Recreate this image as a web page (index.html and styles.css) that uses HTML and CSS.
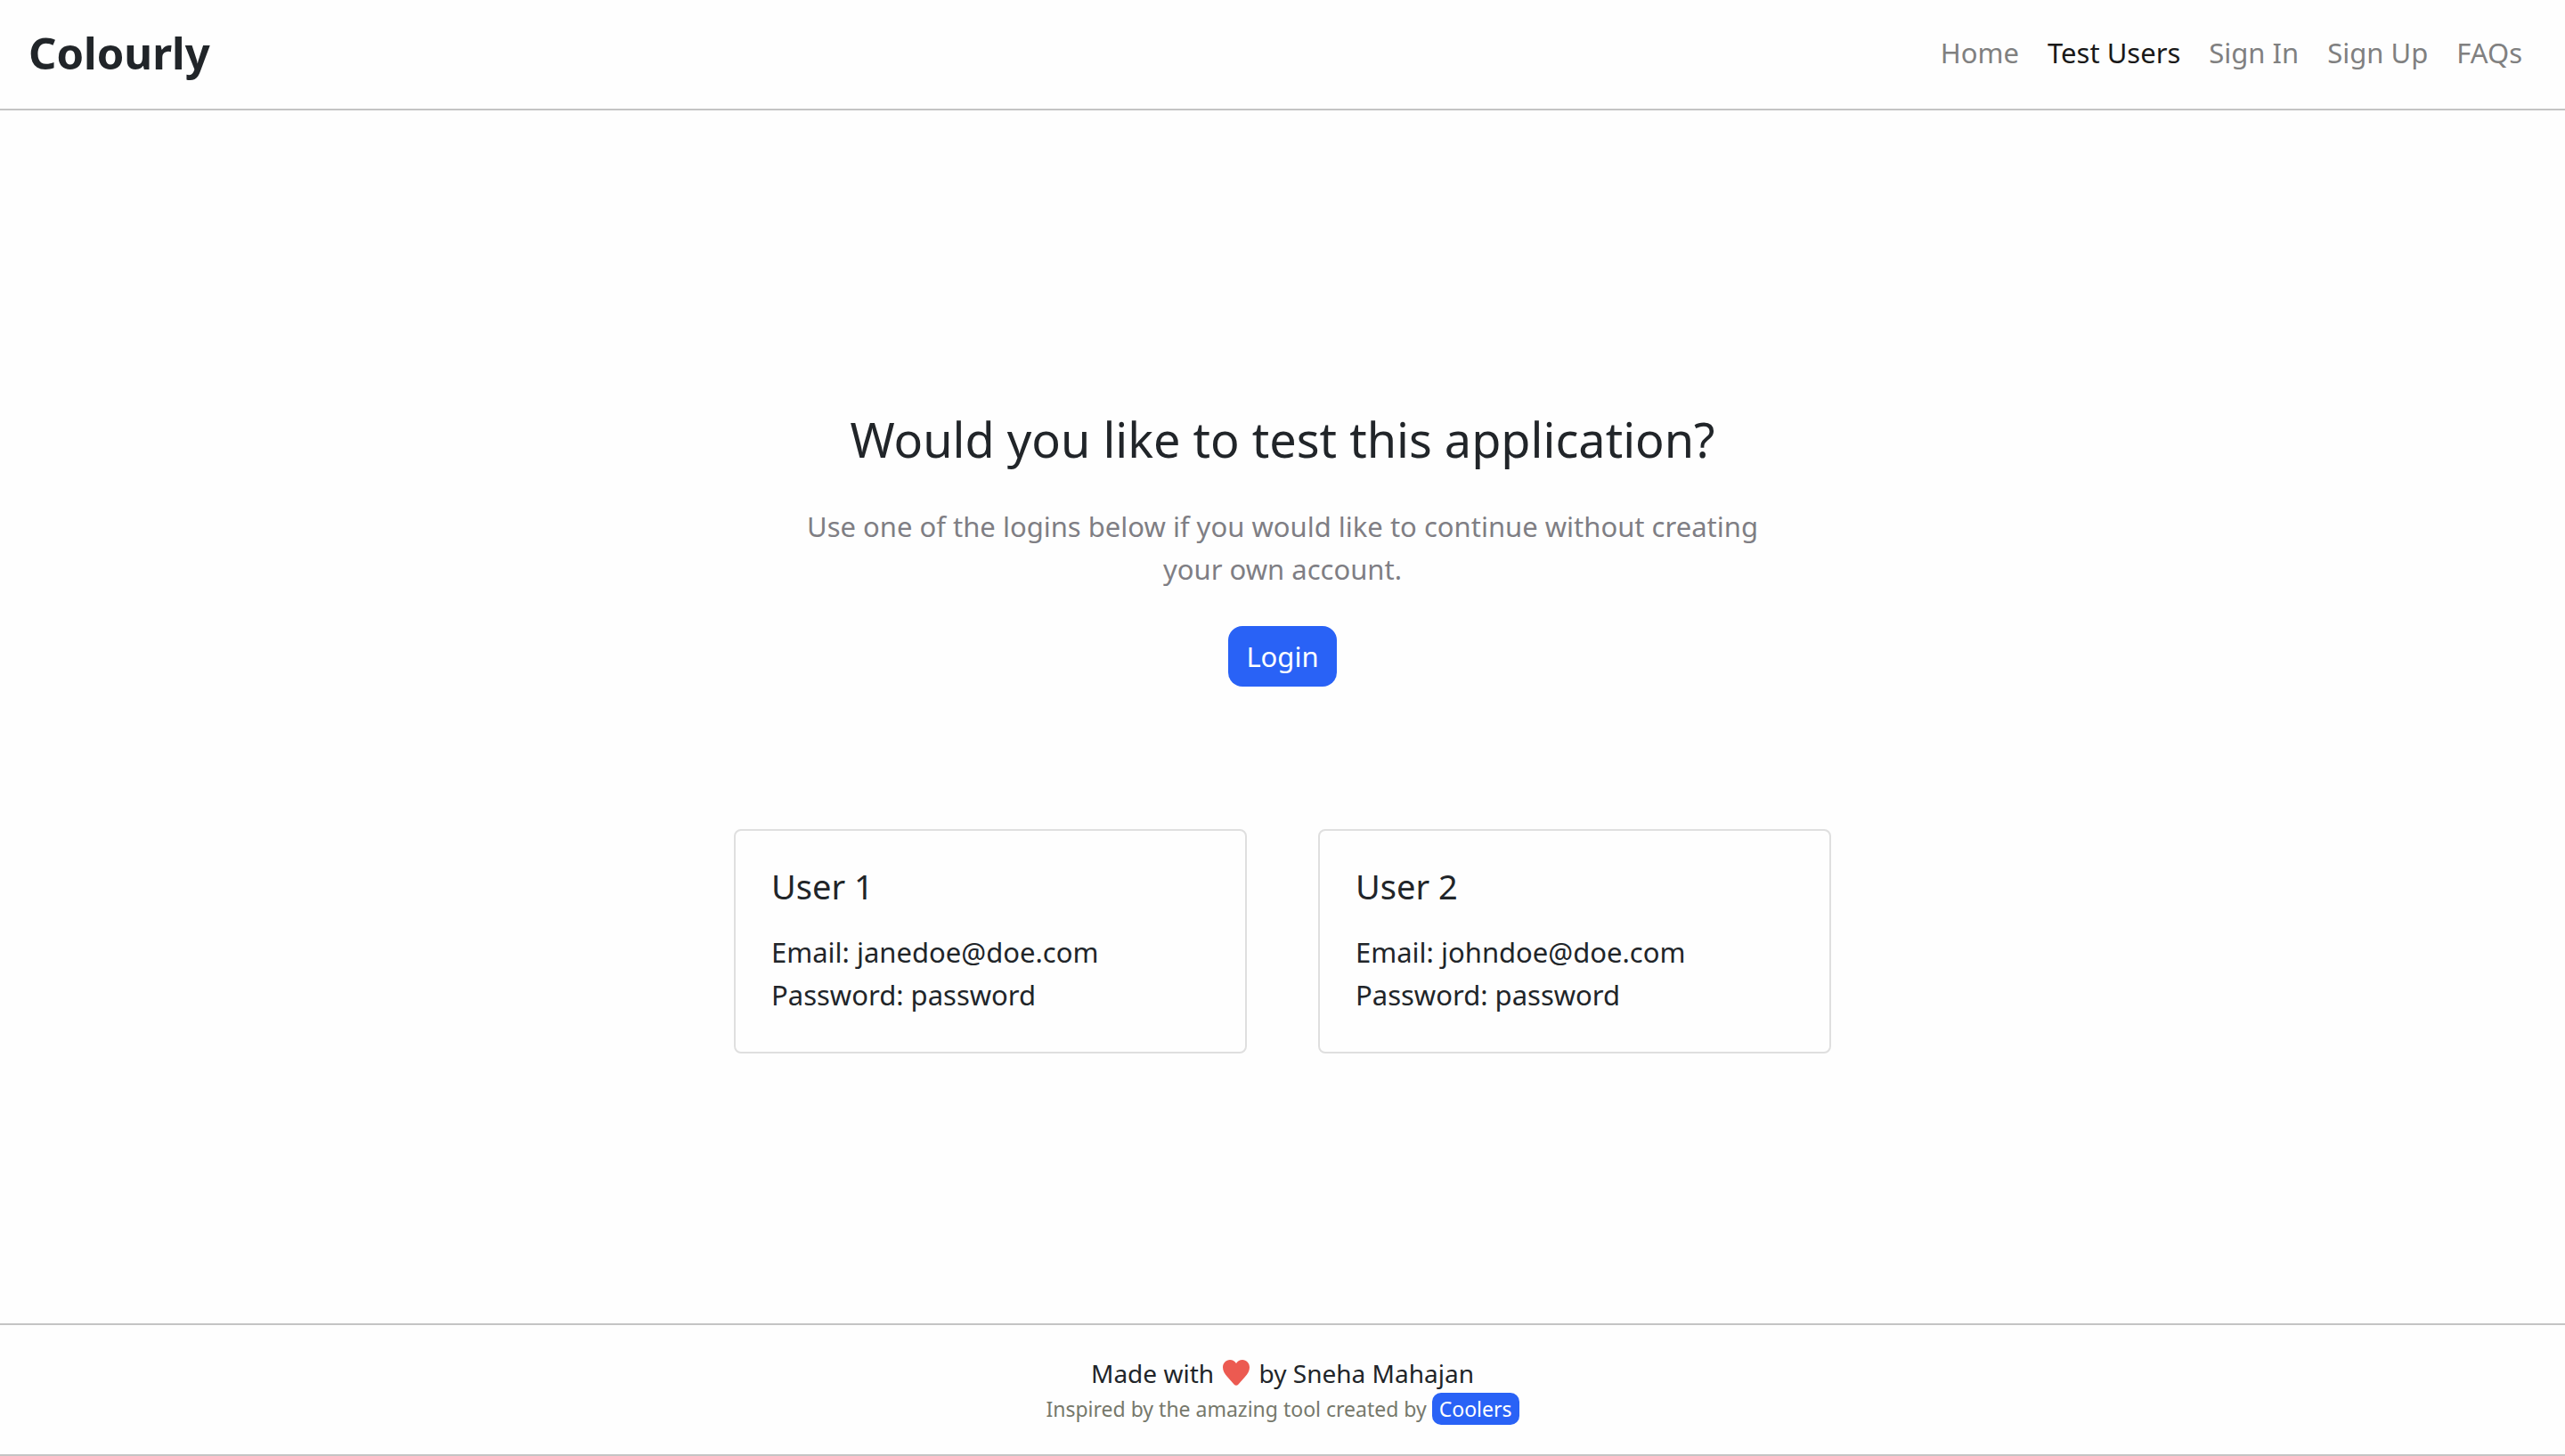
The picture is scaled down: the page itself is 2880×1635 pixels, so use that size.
FILE: index.html
```html
<!DOCTYPE html>
<html lang="en">
<head>
  <meta charset="utf-8">
  <meta name="viewport" content="width=device-width, initial-scale=1">
  <title>Colourly</title>
  <link rel="stylesheet" href="styles.css">
</head>
<body class="page">
  <header class="navbar">
    <a class="brand" href="#">Colourly</a>
    <nav class="nav">
      <a class="nav-link" href="#">Home</a>
      <a class="nav-link active" href="#" aria-current="page">Test Users</a>
      <a class="nav-link" href="#">Sign In</a>
      <a class="nav-link" href="#">Sign Up</a>
      <a class="nav-link" href="#">FAQs</a>
    </nav>
  </header>

  <main class="main">
    <section class="intro">
      <h1 class="title">Would you like to test this application?</h1>
      <p class="lead">Use one of the logins below if you would like to continue without creating your own account.</p>
      <button class="login" type="button">Login</button>
    </section>
    <section class="cards">
      <article class="card">
        <h2 class="card-title">User 1</h2>
        <p class="card-text">Email: janedoe@doe.com<br>Password: password</p>
      </article>
      <article class="card">
        <h2 class="card-title">User 2</h2>
        <p class="card-text">Email: johndoe@doe.com<br>Password: password</p>
      </article>
    </section>
  </main>

  <footer class="footer">
    <p class="made">Made with
      <svg class="heart" viewBox="0 0 30 29" role="img" aria-label="love"><path d="M15 4C13.300 1.400 11 0 8 0 3.500 0 0 3.600 0 8.500c0 4 2 7 5 10.500 2.500 3 5 5.700 7.500 8.500 1.600 1.800 3.400 1.800 5 0C20 24.700 22.500 22 25 19c3-3.500 5-6.500 5-10.500C30 3.600 26.500 0 22 0c-3 0-5.300 1.400-7 4z"/></svg>
      by Sneha Mahajan</p>
    <p class="credit">Inspired by the amazing tool created by <a class="badge" href="#">Coolers</a></p>
  </footer>
</body>
</html>
```
FILE: styles.css
```css
* {
  box-sizing: border-box;
}

.page {
  display: flex;
  flex-direction: column;
  min-height: 100vh;
  margin: 0;
  background: #fefefe;
  color: #212529;
  font-family: "Noto Sans", sans-serif;
  font-size: 31px;
  line-height: 48px;
}

.navbar {
  display: flex;
  align-items: center;
  justify-content: space-between;
  padding: 24px 32px 28px;
  border-bottom: 2px solid #c4c4c4;
}

.brand {
  color: inherit;
  font-size: 49px;
  font-weight: 700;
  line-height: 70px;
  text-decoration: none;
}

.nav {
  display: flex;
}

.nav-link {
  padding: 0 16px;
  color: #808080;
  text-decoration: none;
}

.nav-link.active {
  color: #191919;
}

.main {
  display: flex;
  flex: 1;
  flex-direction: column;
  align-items: center;
  gap: 160px;
  padding: 335px 32px 160px;
}

.intro {
  display: flex;
  flex-direction: column;
  align-items: center;
  gap: 40px;
  max-width: 1120px;
  text-align: center;
}

.title {
  margin: 0;
  font-size: 54px;
  font-weight: 400;
  line-height: 68px;
}

.lead {
  margin: 0;
  color: #7f7e84;
}

.login {
  padding: 10px 20px;
  border: 0;
  border-radius: 16px;
  background: #2962f6;
  color: #fff;
  font: inherit;
}

.cards {
  display: grid;
  grid-template-columns: 1fr 1fr;
  gap: 80px;
  width: 100%;
  max-width: 1232px;
}

.card {
  padding: 40px;
  border: 2px solid #dfdfdf;
  border-radius: 8px;
}

.card-title {
  margin: 0 0 28px;
  font-size: 38px;
  font-weight: 400;
  line-height: 44px;
}

.card-text {
  margin: 0;
}

.footer {
  padding: 32px 32px 33px;
  border-top: 2px solid #c4c4c4;
  border-bottom: 2px solid #c4c4c4;
  text-align: center;
}

.made {
  margin: 0;
  font-size: 28px;
  line-height: 44px;
}

.heart {
  width: 30px;
  height: 29px;
  margin: 0 3px;
  fill: #ec5a51;
  vertical-align: -3px;
}

.credit {
  margin: 0;
  color: #76786b;
  font-size: 23px;
  line-height: 36px;
}

.badge {
  display: inline-block;
  padding: 0 8px;
  border-radius: 10px;
  background: #2962f6;
  color: #fff;
  text-decoration: none;
}
```
